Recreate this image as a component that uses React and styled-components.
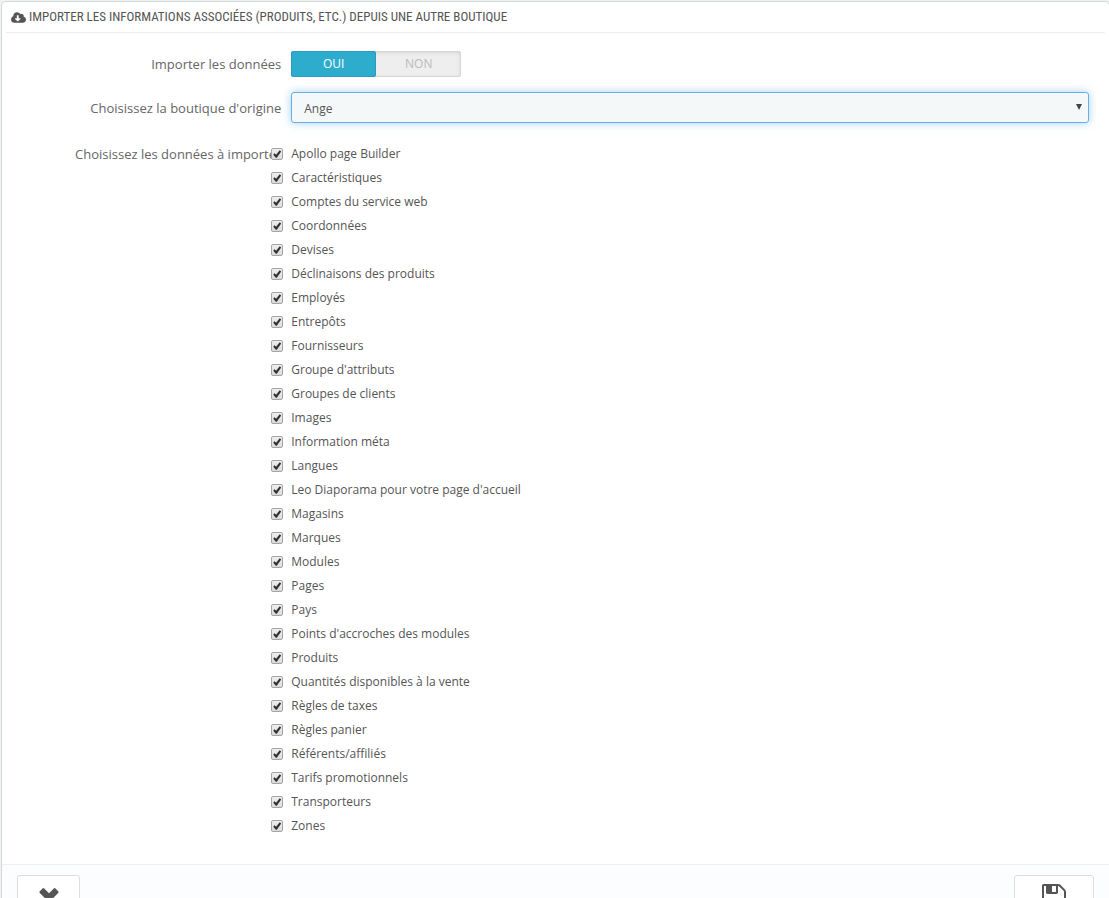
import React, { useState } from "react";
import styled, { createGlobalStyle } from "styled-components";
import { FaCloudDownloadAlt } from "react-icons/fa";

const GlobalStyle = createGlobalStyle`
  *, *::before, *::after { box-sizing: border-box; }
  body {
    margin: 0;
    background: #eff1f2;
    color: #555;
    font: 12px/18px "Open Sans", "Noto Sans", sans-serif;
    overflow-x: hidden;
  }
`;

const Panel = styled.form`
  margin: 1px -1px 20px 1px;
  padding: 0 15px;
  background: #fff;
  border: 1px solid #d3d8db;
  border-radius: 5px;
`;

const Heading = styled.h3`
  display: flex;
  align-items: center;
  gap: 3px;
  height: 31px;
  margin: 0 -11px 18px;
  padding: 0 5px;
  border-bottom: 1px solid #eee;
  font: 400 13px/30px "Ubuntu Condensed", "Roboto Condensed", "Open Sans", sans-serif;
  text-transform: uppercase;
  white-space: nowrap;
`;

const Row = styled.div`
  display: grid;
  grid-template-columns: 25% 75%;
  align-items: start;
  margin-bottom: ${(p) => p.$gap || 15}px;
`;

const Label = styled.div`
  padding: ${(p) => (p.$tall ? 7 : 4)}px 5px 0 0;
  color: #666;
  font-size: 13px;
  text-align: right;
  white-space: nowrap;
`;

const Field = styled.div`
  position: relative;
  padding: 0 5px;
`;

const Switch = styled.div`
  display: flex;
  width: 170px;
  height: 26px;
  border-radius: 3px;
  background: #eee;
  box-shadow: inset 0 0 0 1px #d6d6d6, inset 0 1px 4px rgba(0, 0, 0, 0.15);
`;

const SwitchOption = styled.label`
  flex: 1;
  border-radius: 3px;
  color: #bbb;
  line-height: 25px;
  text-align: center;
  cursor: pointer;

  &:has(input:checked) {
    background: #2eacce;
    box-shadow: inset 0 0 0 1px #2a9cbb;
    color: #fff;
  }

  input {
    position: absolute;
    opacity: 0;
    margin: 0;
    pointer-events: none;
  }
`;

const Select = styled.select`
  display: block;
  width: 100%;
  height: 31px;
  padding: 2px 12px 0;
  appearance: none;
  border: 1px solid #66afe9;
  border-radius: 3px;
  outline: 0;
  background: #f5f8f9;
  box-shadow: 0 0 8px rgba(102, 175, 233, 0.6);
  color: #555;
  font: inherit;
`;

const Arrow = styled.svg`
  position: absolute;
  top: 12px;
  right: 12px;
  width: 6px;
  height: 6px;
  fill: #444;
  pointer-events: none;
`;

const Options = styled.div`
  position: relative;
  margin-left: -20px;
  padding-top: 1px;
`;

const Option = styled.label`
  display: flex;
  align-items: center;
  gap: 8px;
  width: max-content;
  height: 24px;
`;

const Checkbox = styled.input`
  display: grid;
  place-items: center;
  width: 12px;
  height: 12px;
  margin: 0;
  appearance: none;
  border: 1px solid #a5a5a5;
  border-radius: 2px;
  background: linear-gradient(#eee, #dcdcdc);

  &:checked::before {
    content: "";
    width: 8px;
    height: 8px;
    background: #333;
    clip-path: polygon(0 60%, 18% 42%, 36% 58%, 80% 2%, 100% 18%, 44% 98%, 32% 98%);
  }
`;

const Footer = styled.footer`
  display: flex;
  justify-content: space-between;
  margin: 26px -15px 0;
  padding: 10px 15px 12px;
  border-top: 1px solid #eee;
  border-radius: 0 0 5px 5px;
  background: #fcfdfe;
`;

const ActionButton = styled.button`
  display: flex;
  justify-content: center;
  min-width: ${(p) => (p.$wide ? 80 : 63)}px;
  height: 66px;
  padding: 8px 8px 0;
  border: 1px solid #ddd;
  border-radius: 3px;
  background: #fff;
  color: #555;
`;

const Icon = styled.svg`
  width: ${(p) => p.$width}px;
  height: ${(p) => p.$height}px;
  fill: currentColor;
`;

const data = [
  "Apollo page Builder",
  "Caractéristiques",
  "Comptes du service web",
  "Coordonnées",
  "Devises",
  "Déclinaisons des produits",
  "Employés",
  "Entrepôts",
  "Fournisseurs",
  "Groupe d'attributs",
  "Groupes de clients",
  "Images",
  "Information méta",
  "Langues",
  "Leo Diaporama pour votre page d'accueil",
  "Magasins",
  "Marques",
  "Modules",
  "Pages",
  "Pays",
  "Points d'accroches des modules",
  "Produits",
  "Quantités disponibles à la vente",
  "Règles de taxes",
  "Règles panier",
  "Référents/affiliés",
  "Tarifs promotionnels",
  "Transporteurs",
  "Zones",
];

export default function App() {
  const [useImport, setUseImport] = useState(true);

  return (
    <>
      <GlobalStyle />
      <Panel>
        <Heading>
          <FaCloudDownloadAlt size={15} aria-hidden="true" />
          Importer les informations associées (produits, etc.) depuis une autre boutique
        </Heading>

        <Row>
          <Label id="import-label">Importer les données</Label>
          <Field>
            <Switch role="radiogroup" aria-labelledby="import-label">
              <SwitchOption>
                <input type="radio" name="import" checked={useImport} onChange={() => setUseImport(true)} />
                OUI
              </SwitchOption>
              <SwitchOption>
                <input type="radio" name="import" checked={!useImport} onChange={() => setUseImport(false)} />
                NON
              </SwitchOption>
            </Switch>
          </Field>
        </Row>

        <Row $gap={18}>
          <Label as="label" htmlFor="shop" $tall>Choisissez la boutique d'origine</Label>
          <Field>
            <Select id="shop" defaultValue="Ange">
              <option>Ange</option>
            </Select>
            <Arrow viewBox="0 0 6 6" aria-hidden="true">
              <path d="M0 0h6L3 6z" />
            </Arrow>
          </Field>
        </Row>

        <Row>
          <Label id="data-label">Choisissez les données à importer</Label>
          <Field>
            <Options role="group" aria-labelledby="data-label">
              {data.map((name) => (
                <Option key={name}>
                  <Checkbox type="checkbox" defaultChecked />
                  {name}
                </Option>
              ))}
            </Options>
          </Field>
        </Row>

        <Footer>
          <ActionButton type="button" aria-label="Annuler">
            <Icon $width={20} $height={28} viewBox="0 -1 20 28" aria-hidden="true">
              <path d="M.8 6.200 3.500 3.500a1.200 1.200 0 0 1 1.700 0L10 8.300l4.800-4.800a1.200 1.200 0 0 1 1.700 0l2.700 2.700a1.200 1.200 0 0 1 0 1.700L14.400 12.700l4.800 4.800a1.200 1.200 0 0 1 0 1.700l-2.700 2.700a1.200 1.200 0 0 1-1.700 0L10 17.100l-4.800 4.800a1.200 1.200 0 0 1-1.700 0L.8 19.200a1.200 1.200 0 0 1 0-1.700l4.800-4.800L.8 7.900a1.200 1.200 0 0 1 0-1.700z" />
            </Icon>
          </ActionButton>
          <ActionButton type="submit" $wide aria-label="Enregistrer">
            <Icon $width={24} $height={24} viewBox="0 128 1536 1536" aria-hidden="true">
              <path d="M384 1536h768v-384h-768v384zm896 0h128v-896q0-14-10-38.500t-20-34.500l-281-281q-10-10-34-20t-39-10v416q0 40-28 68t-68 28h-576q-40 0-68-28t-28-68v-416h-128v1280h128v-416q0-40 28-68t68-28h832q40 0 68 28t28 68v416zm-384-928v-320q0-13-9.500-22.500t-22.500-9.500h-192q-13 0-22.500 9.500t-9.500 22.500v320q0 13 9.500 22.500t22.500 9.500h192q13 0 22.500-9.500t9.500-22.500zm640 32v928q0 40-28 68t-68 28h-1344q-40 0-68-28t-28-68v-1344q0-40 28-68t68-28h928q40 0 88 20t76 48l280 280q28 28 48 76t20 88z" />
            </Icon>
          </ActionButton>
        </Footer>
      </Panel>
    </>
  );
}
